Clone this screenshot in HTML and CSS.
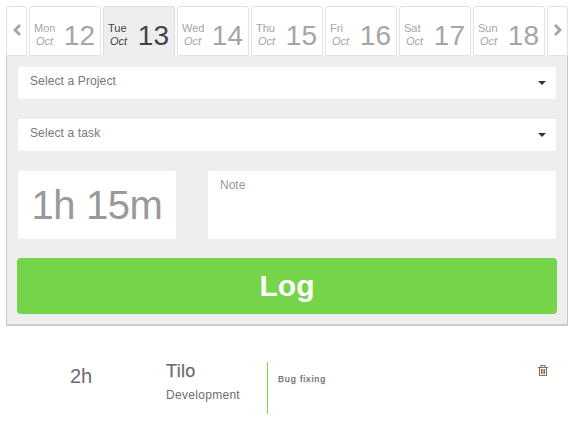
FILE: index.html
```html
<!DOCTYPE html>
<html lang="en">
<head>
<meta charset="utf-8">
<title>Time log</title>
<link rel="stylesheet" href="styles.css">
</head>
<body>
<main class="tracker">
  <nav class="days">
    <a class="arrow"><svg width="9" height="12" viewBox="0 0 9 12"><path d="M7 1 2 6l5 5"/></svg></a>
    <a class="day"><span class="label">Mon<em>Oct</em></span><span class="num">12</span></a>
    <a class="day active"><span class="label">Tue<em>Oct</em></span><span class="num">13</span></a>
    <a class="day"><span class="label">Wed<em>Oct</em></span><span class="num">14</span></a>
    <a class="day"><span class="label">Thu<em>Oct</em></span><span class="num">15</span></a>
    <a class="day"><span class="label">Fri<em>Oct</em></span><span class="num">16</span></a>
    <a class="day"><span class="label">Sat<em>Oct</em></span><span class="num">17</span></a>
    <a class="day"><span class="label">Sun<em>Oct</em></span><span class="num">18</span></a>
    <a class="arrow"><svg width="9" height="12" viewBox="0 0 9 12"><path d="M1 1l5 5-5 5"/></svg></a>
  </nav>
  <section class="panel">
    <div class="select">Select a Project<i class="caret"></i></div>
    <div class="select">Select a task<i class="caret"></i></div>
    <div class="row">
      <div class="time">1h 15m</div>
      <div class="note">Note</div>
    </div>
    <div class="log">Log</div>
  </section>
  <section class="entry">
    <div class="hours">2h</div>
    <div class="project"><div class="name">Tilo</div><div class="task">Development</div></div>
    <div class="comment">Bug fixing</div>
    <svg class="trash" width="10" height="11" viewBox="0 0 10 11"><path d="M0 2.5h10M3 2.5v-2h4v2M1.5 3v7.5h7V3M3.5 4v5M5 4v5M6.5 4v5"/></svg>
  </section>
</main>
</body>
</html>
```
FILE: styles.css
```css
* { box-sizing: border-box; }
body {
  margin: 0;
  background: #fff;
  font-family: "Liberation Sans", Arial, sans-serif;
  font-size: 12px;
}
.tracker { width: 562px; margin: 6px 0 0 6px; }
.days { display: flex; gap: 2px; height: 50px; }
.arrow, .day {
  border: 1px solid #e2e2e2;
  border-radius: 3px 3px 0 0;
  color: #a5a5a5;
  background: #fff;
}
.arrow { width: 21px; padding: 17px 0 0 6px; }
.arrow svg { display: block; fill: none; stroke: #a5a5a5; stroke-width: 2.8; }
.day {
  display: flex;
  justify-content: space-between;
  width: 72px;
  padding: 13px 5px 0 4px;
}
.day.active { background: #eee; border-color: #ddd; border-bottom-color: #eee; color: #444; }
.label { font-size: 11px; line-height: 13px; padding-top: 2px; }
.label em { display: block; padding-left: 2px; }
.num { font-size: 28px; line-height: 31px; }
.panel {
  height: 270px;
  padding: 11px 10px 0;
  background: #eee;
  border: 1px solid #c8c8c8;
  border-top: 0;
  border-bottom: 2px solid #ccc;
}
.select {
  display: flex;
  justify-content: space-between;
  height: 32px;
  margin: 0 1px 20px;
  padding: 7px 10px 0 12px;
  background: #fff;
  border-radius: 1px;
  color: #777;
  line-height: 14px;
  letter-spacing: .12px;
}
.caret {
  width: 8px;
  height: 4px;
  margin-top: 7px;
  border: 4px solid transparent;
  border-top-color: #333;
  border-bottom: 0;
}
.row { display: flex; gap: 32px; margin: 0 1px; height: 68px; }
.time, .note { background: #fff; border-radius: 1px; color: #999; }
.time { width: 158px; text-align: center; font-size: 40px; line-height: 69px; letter-spacing: -.4px; }
.note { flex: 1; padding: 7px 12px; line-height: 14px; }
.log {
  height: 56px;
  margin-top: 19px;
  border-radius: 4px;
  background: #76d44a;
  color: #fff;
  font-size: 30px;
  font-weight: bold;
  line-height: 55px;
  text-align: center;
}
.entry { display: flex; margin-top: 36px; height: 52px; color: #6c6c70; }
.hours { width: 160px; padding: 3px 0 0 64px; font-size: 20px; line-height: 23px; }
.project { width: 101px; }
.name { font-size: 18px; line-height: 18px; letter-spacing: .3px; -webkit-text-stroke: .25px currentColor; }
.task { margin-top: 8px; line-height: 14px; letter-spacing: .3px; }
.comment {
  width: 271px;
  padding: 12px 10px;
  border-left: 1px solid #76d44a;
  font-size: 9px;
  line-height: 11px;
  letter-spacing: .85px;
  -webkit-text-stroke: .25px currentColor;
}
.trash { margin-top: 3px; fill: none; stroke: #8b6e58; stroke-width: 1.1; }
```
